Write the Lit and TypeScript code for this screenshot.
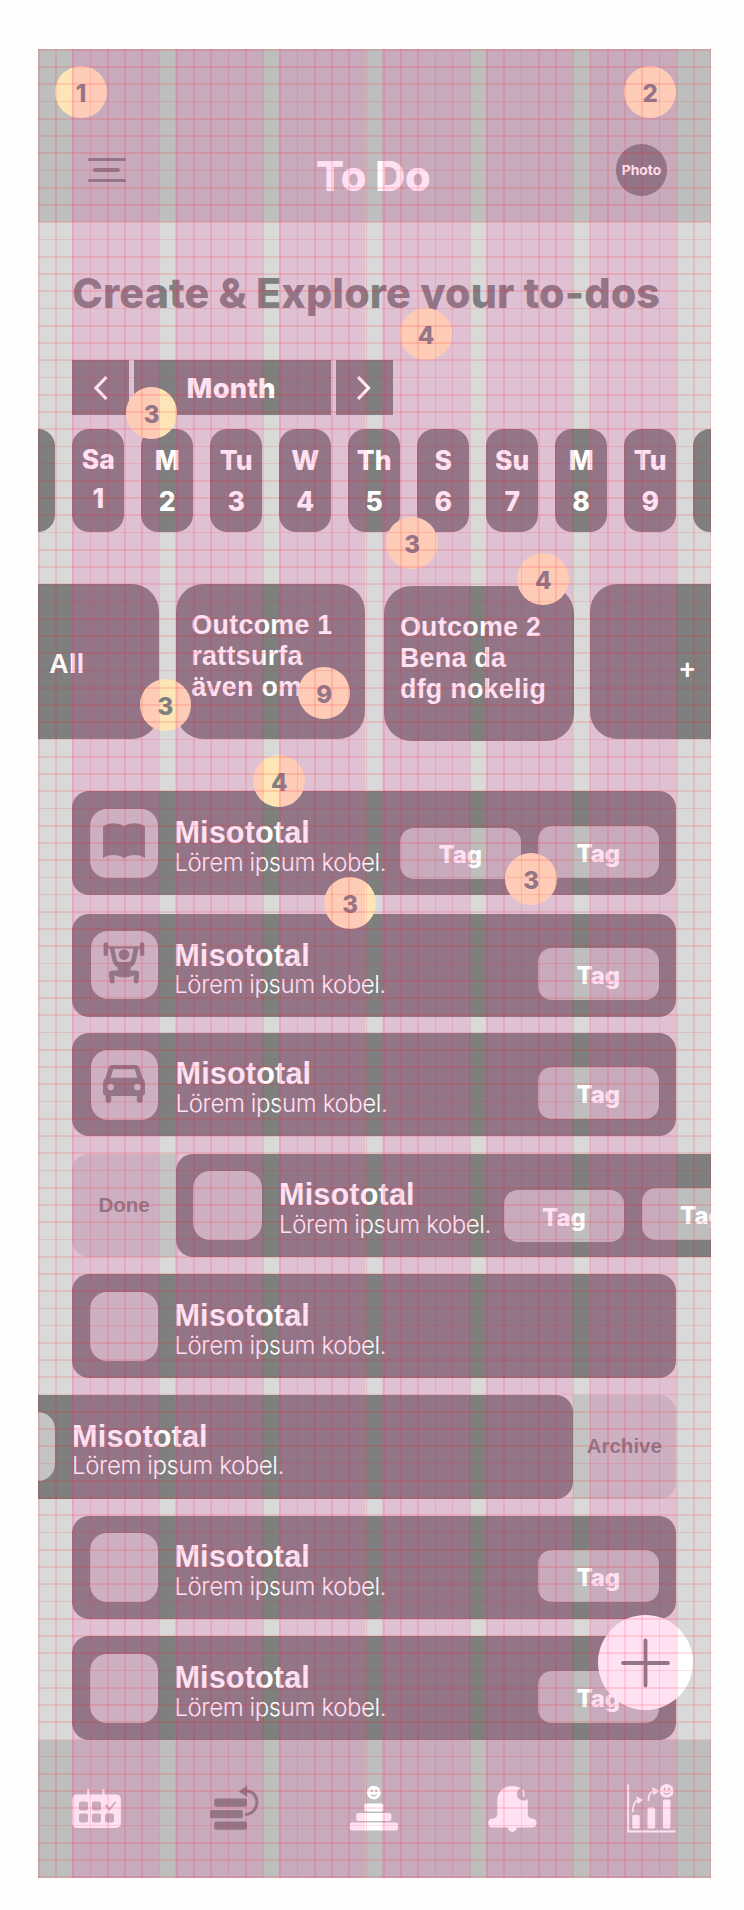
import { LitElement, html, css, svg, nothing } from "lit";
import { customElement } from "lit/decorators.js";

type Task = { gap: number; kind?: string; icon?: string; tags: number };

const TASKS: Task[] = [
  { gap: 0, icon: "book", tags: 2 },
  { gap: 19.1, icon: "gym", kind: "snug", tags: 1 },
  { gap: 15.4, icon: "car", kind: "tall", tags: 1 },
  { gap: 17.6, kind: "done", tags: 2 },
  { gap: 17.4, tags: 0 },
  { gap: 17.3, kind: "archive", tags: 0 },
  { gap: 17.3, tags: 1 },
  { gap: 17.2, tags: 1 },
];

const DAYS = [["", ""], ["Sa", "1"], ["M", "2"], ["Tu", "3"], ["W", "4"], ["Th", "5"], ["S", "6"], ["Su", "7"], ["M", "8"], ["Tu", "9"], ["", ""]];

/* number, centre x, centre y inside the screen */
const NOTES: [number, number, number][] = [
  [1, 43.1, 43], [2, 612.1, 43], [4, 388, 284.4], [3, 113.6, 363.7], [3, 374.1, 493.4], [4, 505.3, 529.6],
  [3, 127.4, 655.6], [9, 286.1, 643.6], [4, 241.3, 731.6], [3, 312.1, 853.9], [3, 493.1, 829.7],
];

const ICONS: Record<string, unknown> = {
  book: svg`<svg width="42" height="42" viewBox="0 0 42 42" fill="#7f7f7f"><path d="M0 5.600C5 1.400 15.500 1 21 5.400C26.500 1 37 1.400 42 5.600V37C36 32.800 26.500 33 21 37.200C15.500 33 6 32.800 0 37Z"/></svg>`,
  gym: svg`<svg width="42" height="44" viewBox="0 0 42 44" fill="#7f7f7f"><rect x=".6" y="1.500" width="4.300" height="13.200" rx="1"/><rect x="37" y="1.500" width="4.300" height="13.200" rx="1"/><path d="M4 5.600H38V7.400H4Z"/><circle cx="21" cy="13.600" r="5.300"/><path d="M6.600 6.500H11.200L13.600 18Q14.300 21 17 21H25Q27.700 21 28.400 18L30.800 6.500H35.600L33 19.500Q31.500 25 27.500 26.500V29.500H33Q36.300 29.500 36.300 33L35.400 41Q35 42.500 33 42.500T30.700 40.500L31 34.500Q21 38.600 11.300 34.500L11.600 40.500Q11.500 42.500 9.300 42.500T6.900 41L6 33Q6 29.500 9.300 29.500H14.700V26.500Q11 25 9.500 19.500Z"/></svg>`,
  car: svg`<svg width="42" height="38" viewBox="0 0 42 38" fill="#7f7f7f"><path fill-rule="evenodd" d="M9 0H33Q35.500 0 36.300 2.500L39.500 13Q42 15 42 18V28Q42 30.400 39.500 30.800V35.300Q39.500 38 36.700 38T33.800 35.300V31H8.200V35.300Q8.200 38 5.400 38T2.600 35.300V30.800Q0 30.400 0 28V18Q0 15 2.500 13L5.700 2.500Q6.500 0 9 0ZM10.300 4.200L7.600 12.800H34.400L31.700 4.200ZM7.600 18.800A3.200 3.200 0 1 0 7.600 25.200A3.200 3.200 0 1 0 7.600 18.800ZM34.400 18.800A3.200 3.200 0 1 0 34.400 25.200A3.200 3.200 0 1 0 34.400 18.800Z"/></svg>`,
};

@customElement("app-root")
export class AppRoot extends LitElement {
  static styles = css`
    :host { display: block; box-sizing: border-box; height: 1910px; padding: 49.3px 0 0 38px; background: #fefefe; font-family: Inter, "Liberation Sans", sans-serif; font-weight: 800; color: #fff; }
    * { box-sizing: border-box; }
    svg { display: block; flex: none; }
    .screen { position: relative; width: 672.6px; height: 1828.4px; background: #d9d9d9; overflow: hidden; white-space: nowrap; }
    header { height: 172.4px; background: #bebebe; display: grid; grid-template-columns: 103.5px 1fr 103.5px; align-items: center; padding-top: 69px; }
    .menu { width: 38px; height: 24.5px; margin: 0 0 0 49.7px; display: flex; flex-direction: column; align-items: center; justify-content: space-between; }
    .menu i { display: block; width: 38px; height: 3.5px; border-radius: 2px; background: #7f7f7f; }
    .menu i.short { width: 27.5px; }
    .name { text-align: center; font-size: 41.4px; line-height: 50px; padding-top: 12px; margin-right: 2px; letter-spacing: -.1px; }
    .photo { width: 51.7px; height: 51.7px; border-radius: 50%; background: #7f7f7f; font-size: 13.8px; font-weight: 700; display: grid; place-items: center; margin-left: 8.5px; }
    h1 { margin: 43.7px 0 0 34.3px; font-size: 41.2px; line-height: 56px; color: #7f7f7f; font-weight: 800; letter-spacing: .15px; }
    .picker { display: flex; gap: 5.3px; margin: 38.9px 0 0 34.3px; }
    .picker div { height: 54.7px; width: 56.7px; background: #7f7f7f; display: grid; place-items: center; font-size: 27.6px; padding-top: 0; }
    .picker .label { width: 196.5px; padding: 0 3px 0 0; }
    .days { display: flex; gap: 17.3px; margin: 13.7px 0 0 -34.6px; }
    .day { flex: none; width: 51.7px; height: 103.4px; border-radius: 17.2px; background: #7f7f7f; text-align: center; font-size: 26.4px; line-height: 41.4px; padding: 11.4px 0 0 0; }
    .day.first { padding: 11.5px 0 0; line-height: 39px; }
    .goals { display: flex; align-items: flex-start; margin: 51.7px 0 0 -68.9px; font-family: "Liberation Sans", Arial, sans-serif; font-weight: 700; }
    .goal { flex: none; width: 189.6px; height: 155.2px; border-radius: 27.5px; background: #7f7f7f; margin-right: 17.2px; padding: 26px 0 0 15.5px; font-size: 26.8px; line-height: 31.2px; letter-spacing: .3px; }
    .goal.low { margin: 1.8px 16.2px 0 1.8px; }
    .goal.mid { padding: 7px 0 0 6px; display: grid; place-items: center; }
    .goal.plus { padding: 18px 0 0 5px; }
    .tasks { margin-top: 50.7px; }
    .line { display: flex; }
    .task { flex: none; width: 603.6px; height: 103.4px; margin-left: 34.3px; border-radius: 17.2px; background: #7f7f7f; display: flex; align-items: flex-start; padding: 17.3px 17.3px 0 17.3px; }
    .thumb { flex: none; width: 68.9px; height: 68.9px; border-radius: 17.2px; background: #c4c4c4; display: grid; place-items: start center; padding-top: 12.5px; }
    .snug .thumb { width: 67.4px; height: 67.4px; margin-left: 1.3px; padding: 10px 1.6px 0 0; }
    .tall .thumb { width: 67.4px; height: 70.5px; margin-left: 1.3px; padding: 15px 1.6px 0 0; }
    .text { margin: 7.4px 0 0 15.9px; width: 212px; }
    .tall .text { margin-left: 17.3px; }
    .done .task { margin-left: 0; }
    .done .text { margin-left: 17px; }
    .archive .task { margin-left: -69.1px; }
    .archive .text { margin-left: 17px; }
    .title { font: 700 30.6px/32px "Liberation Sans", Arial, sans-serif; letter-spacing: .15px; }
    .sub { font-size: 24px; line-height: 26px; font-weight: 300; letter-spacing: -.4px; padding-top: 1.6px; }
    .tags { display: flex; gap: 17.3px; margin: 17.3px 0 0 auto; }
    .tag { width: 120.7px; height: 51.7px; border-radius: 14px; background: #bebebe; font-size: 23.9px; display: grid; place-items: center; padding-top: 2.8px; }
    .tag.low { margin-top: 1.7px; margin-bottom: -1.7px; }
    .swipe { flex: none; font: 700 20.5px/1 "Liberation Sans", Arial, sans-serif; color: #7f7f7f; background: #c4c4c4; width: 103.6px; height: 103.4px; display: grid; place-items: center; }
    .done .swipe { margin-left: 34.3px; border-radius: 17.2px 0 0 17.2px; }
    .archive .swipe { border-radius: 0 17.2px 17.2px 0; padding-bottom: 1px; }
    nav { height: 139px; background: #bebebe; display: flex; justify-content: space-between; padding: 43.7px 33px 0 33px; }
    .fab { position: absolute; left: 560.2px; top: 1566.2px; width: 95px; height: 95px; border-radius: 50%; background: #fff; display: grid; place-items: center; }
    .note { position: absolute; width: 51.7px; height: 51.7px; margin: -25.85px 0 0 -25.85px; border-radius: 50%; background: #fee5b7; color: #7f7f7f; font-size: 24px; display: grid; place-items: center; padding: 3px 0 0 0; }
    .columns, .grid { position: absolute; inset: 0; pointer-events: none; }
    .columns { left: 34.47px; width: 603.2px; background: repeating-linear-gradient(90deg, rgba(255, 65, 180, .155) 0 86.5px, transparent 86.5px 103.44px); }
    .grid { background: repeating-linear-gradient(90deg, rgba(255, 10, 10, .12) 0 1.72px, transparent 1.72px 17.24px), repeating-linear-gradient(180deg, rgba(255, 10, 10, .12) 0 1.72px, transparent 1.72px 17.24px); }
    .count { font: 700 9px Inter, sans-serif; }
  `;

  private line(t: Task) {
    const task = html`<div class="task">
      <div class="thumb">${t.icon ? ICONS[t.icon] : nothing}</div>
      <div class="text"><div class="title">Misototal</div><div class="sub">Lörem ipsum kobel.</div></div>
      <div class="tags">
        ${t.tags > 1 ? html`<div class="tag low">Tag</div>` : nothing}
        ${t.tags ? html`<div class="tag">Tag</div>` : nothing}
      </div>
    </div>`;
    return html`<div class="line ${t.kind ?? ""}" style="margin-top:${t.gap}px">
      ${t.kind === "done" ? html`<div class="swipe">Done</div>` : nothing}
      ${task}
      ${t.kind === "archive" ? html`<div class="swipe">Archive</div>` : nothing}
    </div>`;
  }

  private face(x: number, y: number) {
    return svg`<circle cx=${x} cy=${y} r="6.900" fill="#fff"/><g fill="#aaa"><ellipse cx=${x - 2.2} cy=${y - 2} rx=".8" ry="1.200"/><ellipse cx=${x + 2.2} cy=${y - 2} rx=".8" ry="1.200"/></g><path d="M${x - 3} ${y + 2}q3 3 6 0" fill="none" stroke="#aaa"/>`;
  }

  render() {
    return html`<div class="screen">
      <header>
        <div class="menu"><i></i><i class="short"></i><i></i></div>
        <div class="name">To Do</div>
        <div class="photo">Photo</div>
      </header>
      <h1>Create &amp; Explore your to-dos</h1>
      <div class="picker">
        <div><svg width="14" height="24" viewBox="0 0 14 24" fill="none" stroke="#fff" stroke-width="3.200"><path d="M12.500 1L2 12L12.500 23"/></svg></div>
        <div class="label">Month</div>
        <div><svg width="14" height="24" viewBox="0 0 14 24" fill="none" stroke="#fff" stroke-width="3.200"><path d="M1 1L11.500 12L1 23"/></svg></div>
      </div>
      <div class="days">${DAYS.map(([d, n], i) => html`<div class="day ${i === 1 ? "first" : ""}">${d}<br />${n}</div>`)}</div>
      <div class="goals">
        <div class="goal mid">All</div>
        <div class="goal">Outcome 1<br />rattsurfa<br />även om</div>
        <div class="goal low">Outcome 2<br />Bena da<br />dfg nokelig</div>
        <div class="goal mid plus">+</div>
      </div>
      <div class="tasks">${TASKS.map((t) => this.line(t))}</div>
      <nav>
        <svg width="52" height="50" viewBox="0 0 52 50"><path d="M17.300 6V14M32.500 6V14" stroke="#fff" stroke-width="2"/><rect x="1.300" y="11.500" width="48.500" height="33.500" rx="4.500" fill="#fff"/><g fill="#bebebe"><rect x="8" y="18.500" width="9" height="9" rx="2"/><rect x="21" y="18.500" width="9" height="9" rx="2"/><rect x="8" y="30.500" width="9" height="9" rx="2"/><rect x="21" y="30.500" width="9" height="9" rx="2"/><rect x="34" y="30.500" width="9" height="9" rx="2"/></g><path d="M34.500 22L38.500 26.500L44.500 19" fill="none" stroke="#bebebe" stroke-width="2"/></svg>
        <svg width="52" height="50" viewBox="209.800 1783.500 52 50" fill="#7f7f7f"><rect x="214" y="1799" width="32.700" height="8.300" rx="2"/><rect x="210" y="1810.500" width="32.700" height="8.300" rx="2"/><rect x="214" y="1822" width="32.700" height="8.300" rx="2"/><path d="M238.500 1792L247 1786V1797.500Z"/><path d="M246 1791.500C260.500 1792 260.500 1814 245 1815" fill="none" stroke="#7f7f7f" stroke-width="3"/></svg>
        <svg width="52" height="50" viewBox="348.300 1783.500 52 50" fill="#fff">${this.face(374.2, 1793.2)}<rect x="364.500" y="1804" width="19.200" height="8" rx="2"/><rect x="356.500" y="1813.500" width="35.200" height="8" rx="2"/><rect x="350" y="1823" width="48.300" height="8" rx="2"/></svg>
        <svg width="52" height="50" viewBox="486.700 1783.500 52 50" fill="#fff"><path d="M497 1801C497 1781.500 527.500 1781.500 527.500 1801V1815Q528 1819 532 1819Q536.300 1819.500 536.300 1823.500T532 1828H492.300Q488 1828 488 1823.500T492.300 1819Q496.500 1819 497 1815Z"/><circle cx="512" cy="1828" r="4.400"/><circle cx="523.200" cy="1794.500" r="6.600" fill="#bebebe"/><text class="count" x="520.800" y="1797.800">1</text></svg>
        <svg width="52" height="50" viewBox="626.500 1783.500 52 50" fill="#fff"><path d="M628.700 1785V1832H676" fill="none" stroke="#fff" stroke-width="1.800"/><rect x="632.700" y="1815.500" width="7.500" height="13.500" rx="1.500"/><rect x="648" y="1808" width="7.700" height="21" rx="1.500"/><rect x="663.500" y="1800" width="7.500" height="29" rx="1.500"/>${this.face(667.2, 1791.4)}<path d="M633.300 1812.500Q633.500 1803 638 1801M648.800 1801.500Q649 1793 654 1791.500" fill="none" stroke="#fff" stroke-width="1.800"/><path d="M636.500 1797L644 1800.200L638.500 1804.500ZM652.500 1787.500L660 1791.500L654 1795.500Z"/></svg>
      </nav>
      <div class="fab"><svg width="49" height="50" viewBox="0 0 49 50" stroke="#7f7f7f" stroke-width="3.800" stroke-linecap="round"><path d="M2 25H47M24.500 2.500V47.500"/></svg></div>
      ${NOTES.map(([n, x, y]) => html`<div class="note" style="left:${x}px;top:${y}px">${n}</div>`)}
      <div class="columns"></div>
      <div class="grid"></div>
    </div>`;
  }
}
